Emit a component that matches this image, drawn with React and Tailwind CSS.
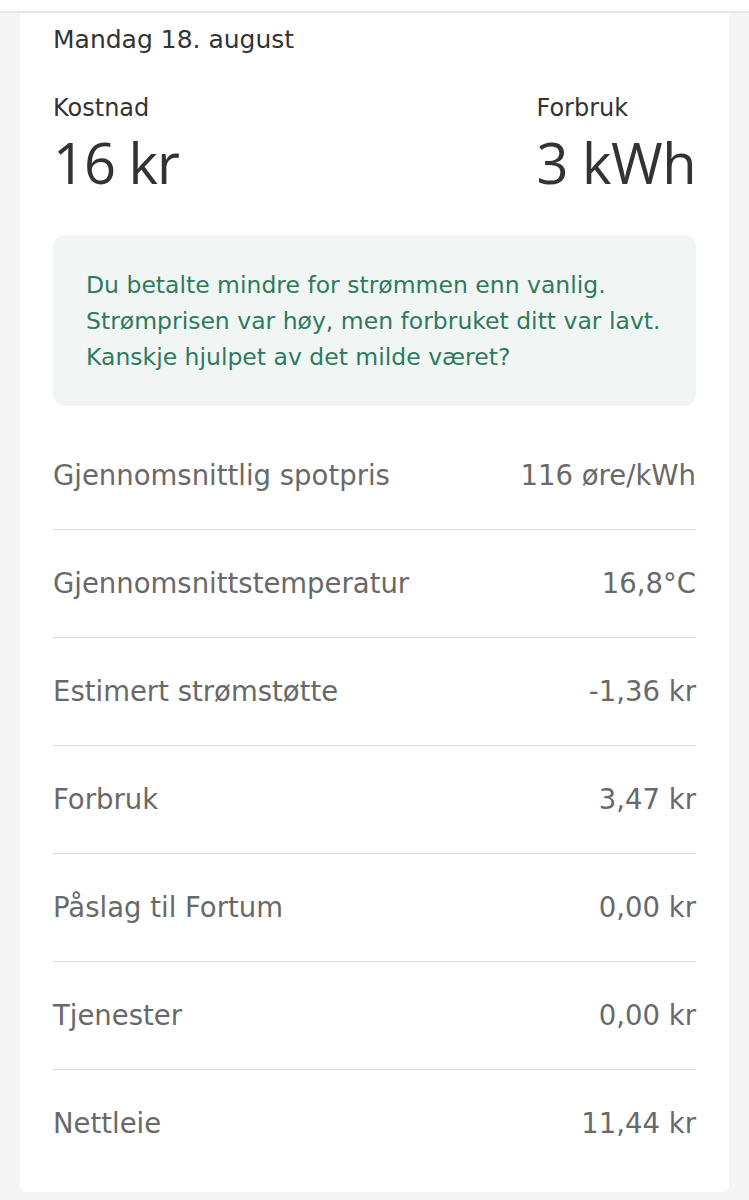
const rows = [
  { label: 'Gjennomsnittlig spotpris', value: '116 øre/kWh' },
  { label: 'Gjennomsnittstemperatur', value: '16,8°C' },
  { label: 'Estimert strømstøtte', value: '-1,36 kr' },
  { label: 'Forbruk', value: '3,47 kr' },
  { label: 'Påslag til Fortum', value: '0,00 kr' },
  { label: 'Tjenester', value: '0,00 kr' },
  { label: 'Nettleie', value: '11,44 kr' },
];

export default function App() {
  return (
    <div className="min-h-[1200px] bg-[#f5f5f5] font-['DejaVu_Sans',sans-serif]">
      {/* Top bar */}
      <div className="h-[13px] bg-white border-b-2 border-[#e8e8e8]" />

      {/* Card */}
      <div className="mx-[20px] bg-white rounded-b-md px-[33px] pt-[11px] pb-[14px]">
        <h2 className="text-[25px] leading-[32px] text-[#333333]">Mandag 18. august</h2>

        <div className="flex justify-between mt-[38px]">
          <div>
            <p className="text-[24px] leading-[28px] text-[#333333]">Kostnad</p>
            <p className="font-['Open_Sans',sans-serif] text-[56px] leading-[64px] tracking-[-1px] text-[#333333] mt-[8px]">16 kr</p>
          </div>
          <div className="whitespace-nowrap">
            <p className="text-[24px] leading-[28px] text-[#333333]">Forbruk</p>
            <p className="font-['Open_Sans',sans-serif] text-[56px] leading-[64px] tracking-[-0.5px] text-[#333333] mt-[8px]">3 kWh</p>
          </div>
        </div>

        {/* Insight */}
        <div className="mt-[41px] bg-[#f1f6f4] rounded-xl px-[33px] pt-[32px] pb-[31px]">
          <p className="text-[23.5px] leading-[36px] text-[#2f7a5f]">
            Du betalte mindre for strømmen enn vanlig.
            <br />
            Strømprisen var høy, men forbruket ditt var lavt.
            <br />
            Kanskje hjulpet av det milde været?
          </p>
        </div>

        {/* Details */}
        <div className="mt-[16px] divide-y divide-[#dddddd]">
          {rows.map((row) => (
            <div key={row.label} className="flex items-center justify-between h-[108px] text-[27.5px] text-[#696969]">
              <span>{row.label}</span>
              <span>{row.value}</span>
            </div>
          ))}
        </div>
      </div>
    </div>
  );
}
